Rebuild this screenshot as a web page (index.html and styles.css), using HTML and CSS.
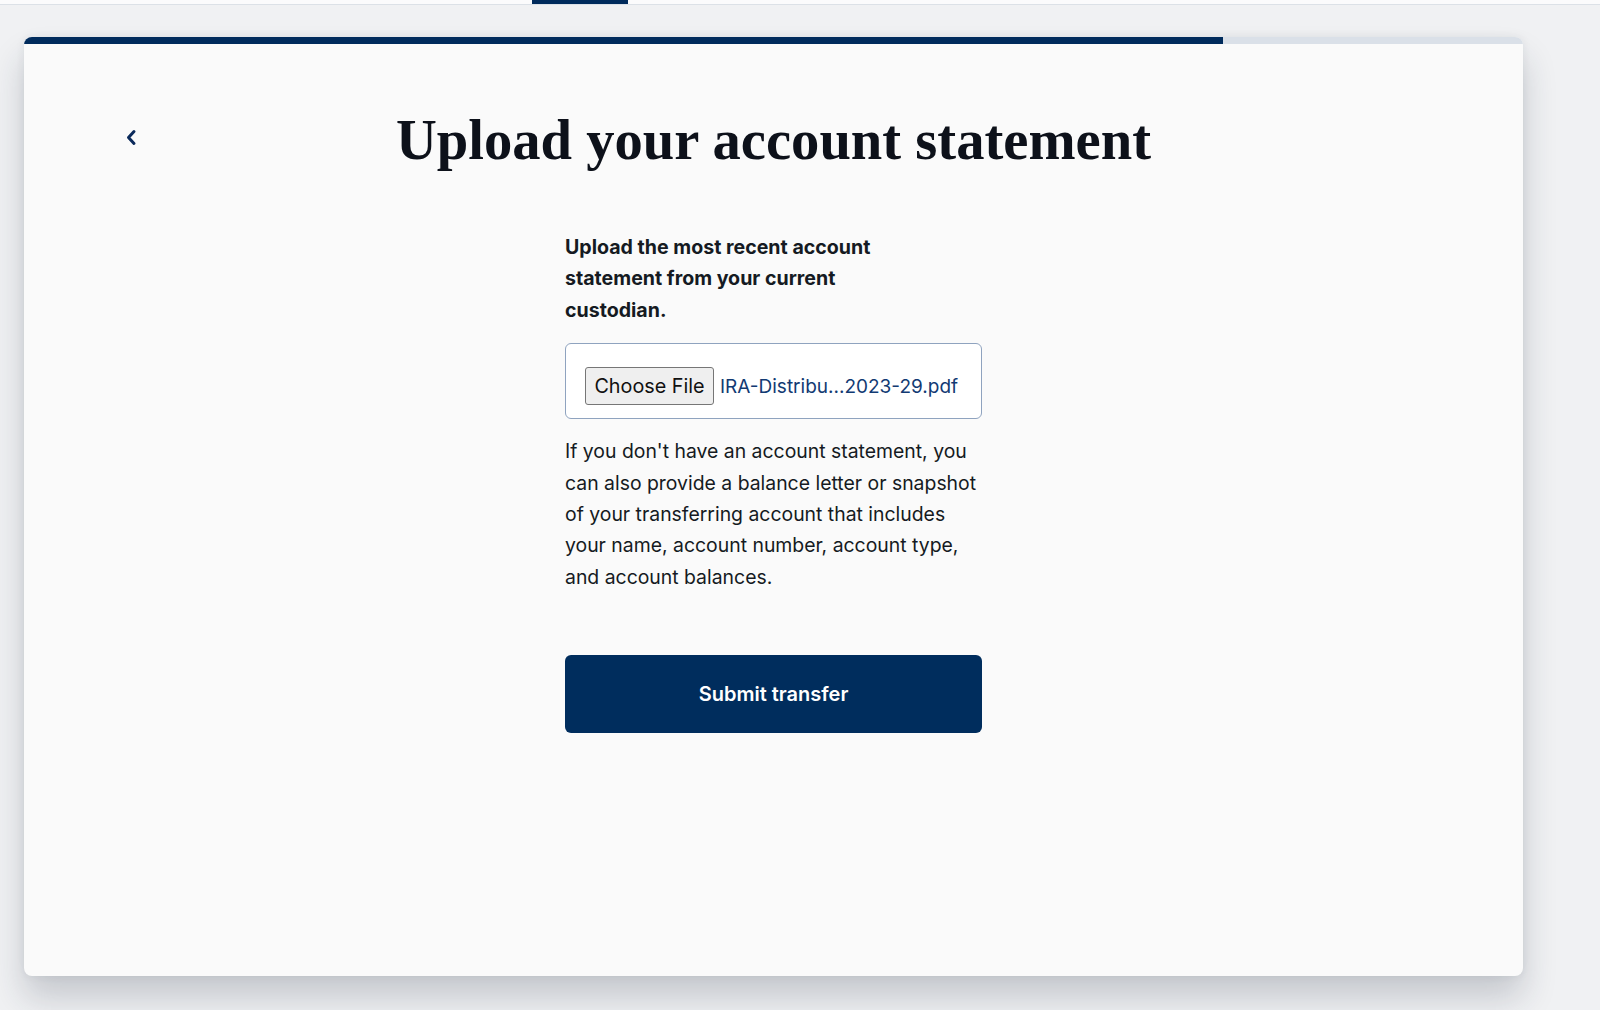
FILE: index.html
```html
<!DOCTYPE html>
<html lang="en">
<head>
    <meta charset="UTF-8">
    <meta name="viewport" content="width=device-width, initial-scale=1.0">
    <title>Upload your account statement</title>
    <link rel="stylesheet" href="styles.css">
</head>
<body>
    <div class="topbar">
        <div class="topbar-tab"></div>
    </div>

    <div class="card">
        <div class="progress">
            <div class="progress-fill"></div>
        </div>

        <div class="header">
            <a class="back" href="#" aria-label="Back">
                <svg width="12" height="17" viewBox="0 0 12 17">
                    <polyline points="9,2.5 3.5,8.5 9,14.5" fill="none" stroke="#0b2a5b" stroke-width="3" stroke-linecap="round" stroke-linejoin="round"/>
                </svg>
            </a>
            <h1>Upload your account statement</h1>
            <div></div>
        </div>

        <form class="upload-form" onsubmit="return false;">
            <p class="intro">Upload the most recent account statement from your current custodian.</p>

            <div class="file-box">
                <button type="button" class="file-button">Choose File</button>
                <span class="file-name">IRA-Distribu...2023-29.pdf</span>
            </div>

            <p class="hint">If you don't have an account statement, you can also provide a balance letter or snapshot of your transferring account that includes your name, account number, account type, and account balances.</p>

            <button type="submit" class="submit">Submit transfer</button>
        </form>
    </div>
</body>
</html>
```

FILE: styles.css
```css
body {
    margin: 0;
    padding-bottom: 60px;
    font-family: Inter, "Noto Sans", Arial, sans-serif;
    background-color: #f0f1f3;
    color: #151a22;
}
.topbar {
    height: 4px;
    background-color: #fbfbfc;
    border-bottom: 1px solid #dce1e7;
    padding-left: 532px;
}
.topbar-tab {
    width: 96px;
    height: 4px;
    background-color: #002b5c;
}
.card {
    margin: 32px 0 0 24px;
    width: 1499px;
    height: 939px;
    background-color: #fafafa;
    border-radius: 8px;
    overflow: hidden;
    box-shadow: 0 22px 34px rgba(30, 40, 60, 0.2), 0 0 10px rgba(30, 40, 60, 0.07);
}
.progress {
    height: 7px;
    background-color: #dae0e8;
}
.progress-fill {
    width: 1199px;
    height: 100%;
    background-color: #002b5c;
}
.header {
    display: grid;
    grid-template-columns: 1fr auto 1fr;
    align-items: center;
    margin-top: 60px;
    height: 72px;
}
.back {
    display: flex;
    padding-left: 101px;
    margin-top: -5px;
}
h1 {
    margin: 0;
    font-family: "Liberation Serif", "Times New Roman", serif;
    font-weight: bold;
    font-size: 56.6px;
    line-height: 72px;
    color: #0d111a;
}
.upload-form {
    width: 417px;
    margin: 56px auto 0;
}
.intro {
    margin: 0;
    max-width: 320px;
    font-size: 19.6px;
    font-weight: 700;
    line-height: 31.4px;
}
.file-box {
    box-sizing: border-box;
    display: flex;
    align-items: center;
    gap: 6px;
    height: 76px;
    margin-top: 17px;
    padding: 10px 19px 0;
    border: 1px solid #8fa3bf;
    border-radius: 6px;
    background-color: #fff;
}
.file-button {
    width: 129px;
    height: 38px;
    padding: 0;
    font-family: Inter, "Noto Sans", Arial, sans-serif;
    font-size: 19.8px;
    color: #111;
    background-color: #efefef;
    border: 1px solid #767676;
    border-radius: 3px;
}
.file-name {
    font-size: 19px;
    color: #123a73;
}
.hint {
    margin: 17px 0 0;
    font-size: 19.4px;
    line-height: 31.4px;
}
.submit {
    display: block;
    width: 100%;
    height: 78px;
    margin-top: 62px;
    font-family: Inter, "Noto Sans", Arial, sans-serif;
    font-size: 20px;
    font-weight: 600;
    color: #fff;
    background-color: #002d5d;
    border: none;
    border-radius: 6px;
    cursor: pointer;
}
```
